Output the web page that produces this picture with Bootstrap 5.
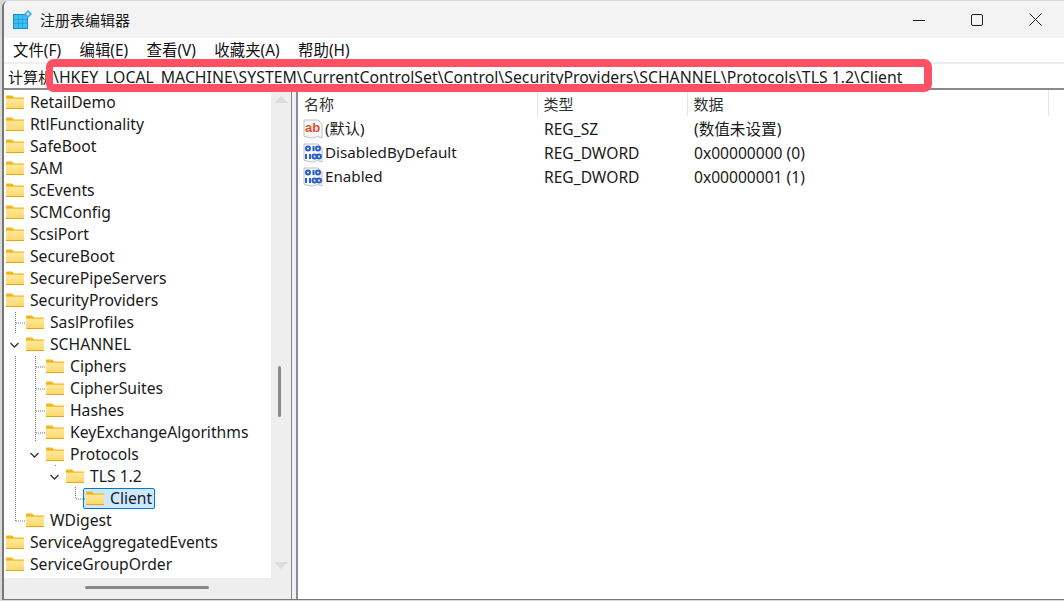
<!DOCTYPE html>
<html lang="zh-CN"><head><meta charset="utf-8"><title>注册表编辑器</title>
<link href="https://cdn.jsdelivr.net/npm/bootstrap@5.3.0/dist/css/bootstrap.min.css" rel="stylesheet">
<style>
html,body{margin:0;height:601px;overflow:hidden;background:#d8d8d8}
body{font-family:"Noto Sans","Noto Sans CJK SC",sans-serif;font-size:15.7px;color:#1a1a1a;line-height:22px}
.win{position:relative;margin:1px 0 0 2px;height:599px;background:#f0f0f0;border-left:2px solid #777;border-bottom:1px solid #777;border-radius:6px 0 0 0;overflow:hidden;display:flex;flex-direction:column}
.tbar{height:37px;flex:none;background:#f3f3f3;padding-left:9px}
.tbar .ttl{font-size:15px;margin-left:8px}
.ctl{width:58px;height:37px}
.mbar{height:24px;flex:none;background:#fff;padding:2px 0 0 9px;gap:18.5px;font-size:15.4px;color:#111}
.addr{height:28px;flex:none;background:#fff;border-top:2px solid #eee;border-bottom:2px solid #8a8a8a;padding-left:4px;font-size:15px;white-space:nowrap;line-height:26px}
.addr .pth{margin-left:0;font-size:15.8px}
.panes{flex:1;min-height:0}
.lpane{width:288px;flex:none;background:#eee;position:relative;border-right:1px solid #888}
.tree{width:267px;height:488px;background:#fff;padding-top:1px;overflow:hidden;flex:none}
.trow{height:22px;display:flex;align-items:center;white-space:nowrap}
.trow svg{flex:none;width:18px;height:14px;margin-right:6px}
.l0{padding-left:2px}.l1{padding-left:22px}.l2{padding-left:42px}.l3{padding-left:62px}.l4{padding-left:82px}
.sel{background:#cce8ff;border:1px solid #0078d7;border-radius:2px;height:21px;line-height:19px;padding:0 2px 0 2px;margin-left:-3px;display:flex;align-items:center;white-space:nowrap}
.sel svg{margin-right:6px}
.lines{position:absolute;left:0;top:0;pointer-events:none}
.vsb{width:20px;flex:none;height:488px;position:relative}
.vthumb{position:absolute;left:7px;top:276px;width:3px;height:51px;background:#8a8a8a;border-radius:2px}
.tri{position:absolute;left:3px;width:0;height:0;border-left:7px solid transparent;border-right:7px solid transparent}
.tri.up{top:6px;border-bottom:7px solid #dcdcdc}
.tri.dn{top:472px;border-top:7px solid #dcdcdc}
.hsb{height:18px;position:relative}
.hthumb{position:absolute;left:81px;top:8px;width:124px;height:3px;background:#8a8a8a;border-radius:2px}
.rpane{flex:1;margin-left:4px;background:#fff;border-left:2px solid #8a8a94;min-width:0}
.vals{table-layout:fixed;width:750px;margin:0;--bs-table-bg:transparent;color:#1a1a1a}
.vals th{font-weight:400;font-size:15px;height:26px;padding:1px 0 0 6px;border-right:1px solid #e5e5e5;line-height:24px;vertical-align:middle;color:#333}
.vals td{height:24px;padding:2px 0 0 7px;line-height:22px;white-space:nowrap;vertical-align:middle;font-size:15.6px}
.vals td.nm{padding:0 0 0 5px;line-height:24px;font-size:15.2px}
.vals td svg{width:20px;height:20px;margin-right:2px;vertical-align:-5px}
.hl{position:absolute;left:42px;top:58px;width:886px;height:33px;border:8px solid #ff5064;border-left-width:7px;border-radius:8px;pointer-events:none}
</style></head><body>
<svg width="0" height="0" class="d-block position-absolute">
<defs>
<linearGradient id="fg" x1="0" y1="0" x2="0" y2="1"><stop offset="0" stop-color="#ffeaa0"/><stop offset="1" stop-color="#fdd768"/></linearGradient>
<symbol id="fold" viewBox="0 0 18 14"><path d="M0 1.500Q0 .5 1 .5H6L8 2.500H18V3.500H0Z" fill="#f5b319"/><rect y="3" width="18" height="11" fill="url(#fg)"/><rect y="3" width="18" height="1" fill="#f9c53a"/><rect y="13" width="18" height="1" fill="#e5a81d"/></symbol>
<symbol id="pg" viewBox="0 0 20 20"><path d="M1 1H15L19 5V19L15 17.500 9 19 1 17.500Z" fill="#f6f6f6" stroke="#c2c2c2"/></symbol>
<symbol id="bin" viewBox="0 0 20 20"><use href="#pg"/><g fill="none" stroke="#2b5fc9" stroke-width="2"><circle cx="5" cy="5.500" r="2"/><path d="M10.500 3V8"/><circle cx="15" cy="5.500" r="2"/><path d="M3 11V16M7 11V16"/><circle cx="11.500" cy="13.500" r="2"/><circle cx="16" cy="13.500" r="2"/></g></symbol>
</defs></svg>
<div class="win">
 <div class="tbar d-flex align-items-center">
  <svg width="19" height="19" viewBox="0 0 19 19"><rect y="4" width="15" height="15" fill="#0a8fd8"/><g fill="#3fc0ef"><rect x="1" y="5" width="4" height="4"/><rect x="5.500" y="5" width="4" height="4"/><rect x="10" y="5" width="4" height="4"/><rect x="1" y="9.500" width="4" height="4"/><rect x="5.500" y="9.500" width="4" height="4"/><rect x="10" y="9.500" width="4" height="4"/><rect x="1" y="14" width="4" height="4"/><rect x="5.500" y="14" width="4" height="4"/><rect x="10" y="14" width="4" height="4"/></g><path d="M15 0L19 4 15 8 11 4Z" fill="#3da9dc"/><path d="M15 2L17 4 15 6 13 4Z" fill="#bfe8fa"/></svg>
  <span class="ttl">注册表编辑器</span>
  <div class="ms-auto d-flex">
   <div class="ctl d-flex align-items-center justify-content-center"><svg width="12" height="12" viewBox="0 0 12 12"><path d="M0 6.500H12" stroke="#222"/></svg></div>
   <div class="ctl d-flex align-items-center justify-content-center"><svg width="12" height="12" viewBox="0 0 12 12"><rect x=".5" y=".5" width="11" height="11" rx="1.500" fill="none" stroke="#222"/></svg></div>
   <div class="ctl d-flex align-items-center justify-content-center"><svg width="13" height="13" viewBox="0 0 13 13"><path d="M.5.5L12.500 12.500M12.500.5L.5 12.500" stroke="#222"/></svg></div>
  </div>
 </div>
 <div class="mbar d-flex align-items-center"><span>文件(F)</span><span>编辑(E)</span><span>查看(V)</span><span>收藏夹(A)</span><span>帮助(H)</span></div>
 <div class="addr">计算机<span class="pth">\HKEY_LOCAL_MACHINE\SYSTEM\CurrentControlSet\Control\SecurityProviders\SCHANNEL\Protocols\TLS 1.2\Client</span></div>
 <div class="panes d-flex">
  <div class="lpane d-flex flex-column">
   <div class="d-flex">
    <div class="tree">
     <div class="trow l0"><svg><use href="#fold"/></svg>RetailDemo</div>
     <div class="trow l0"><svg><use href="#fold"/></svg>RtlFunctionality</div>
     <div class="trow l0"><svg><use href="#fold"/></svg>SafeBoot</div>
     <div class="trow l0"><svg><use href="#fold"/></svg>SAM</div>
     <div class="trow l0"><svg><use href="#fold"/></svg>ScEvents</div>
     <div class="trow l0"><svg><use href="#fold"/></svg>SCMConfig</div>
     <div class="trow l0"><svg><use href="#fold"/></svg>ScsiPort</div>
     <div class="trow l0"><svg><use href="#fold"/></svg>SecureBoot</div>
     <div class="trow l0"><svg><use href="#fold"/></svg>SecurePipeServers</div>
     <div class="trow l0"><svg><use href="#fold"/></svg>SecurityProviders</div>
     <div class="trow l1"><svg><use href="#fold"/></svg>SaslProfiles</div>
     <div class="trow l1"><svg><use href="#fold"/></svg>SCHANNEL</div>
     <div class="trow l2"><svg><use href="#fold"/></svg>Ciphers</div>
     <div class="trow l2"><svg><use href="#fold"/></svg>CipherSuites</div>
     <div class="trow l2"><svg><use href="#fold"/></svg>Hashes</div>
     <div class="trow l2"><svg><use href="#fold"/></svg>KeyExchangeAlgorithms</div>
     <div class="trow l2"><svg><use href="#fold"/></svg>Protocols</div>
     <div class="trow l3"><svg><use href="#fold"/></svg>TLS 1.2</div>
     <div class="trow l4"><div class="sel"><svg><use href="#fold"/></svg>Client</div></div>
     <div class="trow l1"><svg><use href="#fold"/></svg>WDigest</div>
     <div class="trow l0"><svg><use href="#fold"/></svg>ServiceAggregatedEvents</div>
     <div class="trow l0"><svg><use href="#fold"/></svg>ServiceGroupOrder</div>
    </div>
    <div class="vsb"><div class="tri up"></div><div class="vthumb"></div><div class="tri dn"></div></div>
   </div>
   <div class="hsb"><div class="hthumb"></div></div>
   <svg class="lines" width="110" height="488" viewBox="0 0 110 488">
    <g fill="none" stroke="#777" stroke-dasharray="1 1">
     <path d="M11.500 222V244M11.500 266V431M12 233H21M12 431H21"/>
     <path d="M31.500 266V352M32 277H41M32 299H41M32 321H41M32 343H41"/>
     <path d="M71.500 397V409M72 409H81"/>
     <path d="M51.500 375V376"/>
    </g>
    <g fill="none" stroke="#333" stroke-width="1.300">
     <path d="M6.500 253L10.500 257 14.500 253"/>
     <path d="M26.500 363L30.500 367 34.500 363"/>
     <path d="M46.500 385L50.500 389 54.500 385"/>
    </g>
   </svg>
  </div>
  <div class="rpane">
   <table class="table table-borderless vals">
    <colgroup><col style="width:239px"><col style="width:150px"><col style="width:361px"></colgroup>
    <thead><tr><th>名称</th><th>类型</th><th>数据</th></tr></thead>
    <tbody>
    <tr><td class="nm"><svg viewBox="0 0 20 20"><use href="#pg"/><text x="2" y="13" font-family="Liberation Sans,sans-serif" font-weight="700" font-size="13" fill="#d9532a">ab</text></svg>(默认)</td><td>REG_SZ</td><td>(数值未设置)</td></tr>
    <tr><td class="nm"><svg viewBox="0 0 20 20"><use href="#bin"/></svg>DisabledByDefault</td><td>REG_DWORD</td><td>0x00000000 (0)</td></tr>
    <tr><td class="nm"><svg viewBox="0 0 20 20"><use href="#bin"/></svg>Enabled</td><td>REG_DWORD</td><td>0x00000001 (1)</td></tr>
    </tbody>
   </table>
  </div>
 </div>
 <div class="hl"></div>
</div>
</body></html>
